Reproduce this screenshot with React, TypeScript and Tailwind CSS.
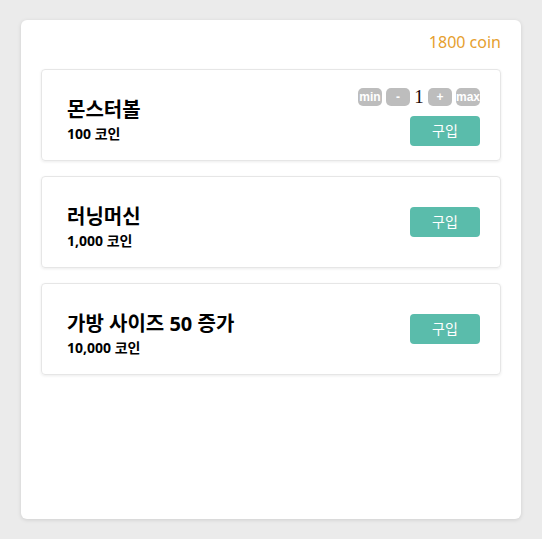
import { useState } from "react";

type Item = { name: string; price: string; stepper?: boolean };

const items: Item[] = [
    { name: "몬스터볼", price: "100 코인", stepper: true },
    { name: "러닝머신", price: "1,000 코인" },
    { name: "가방 사이즈 50 증가", price: "10,000 코인" },
];

function Stepper() {
    const [count, setCount] = useState(1);
    const btn =
        "w-6 h-[18px] rounded-[5px] bg-[#bdbdbd] text-white text-[12px] font-bold leading-[18px] flex items-center justify-center whitespace-nowrap font-['Liberation_Sans',sans-serif]";

    return (
        <div className="flex items-center gap-1">
            <button className={btn} onClick={() => setCount(1)}>min</button>
            <button className={btn} onClick={() => setCount(Math.max(1, count - 1))}>-</button>
            <span className="w-[10px] text-center text-[19px] leading-[18px] text-[#1a0505] font-['Liberation_Serif',serif]">{count}</span>
            <button className={btn} onClick={() => setCount(count + 1)}>+</button>
            <button className={btn} onClick={() => setCount(99)}>max</button>
        </div>
    );
}

export default function App() {
    return (
        <div className="min-h-screen bg-[#ebebeb] pt-5 px-[21px] font-['Noto_Sans','Noto_Sans_CJK_KR',sans-serif]">
            <div className="h-[499px] w-[500px] rounded-md bg-white px-5 pt-[10px] shadow-[0_1px_4px_rgba(0,0,0,0.12)]">
                {/* Wallet */}
                <div className="text-right text-base leading-6 text-[#e6a02e]">1800 coin</div>

                {/* Shop items */}
                <div className="mt-[15px] flex flex-col gap-[15px]">
                    {items.map((item) => (
                        <div
                            key={item.name}
                            className="flex h-[92px] items-center justify-between rounded-[4px] border border-[#e6e6e6] pl-[25px] pr-5 shadow-[0_1px_3px_rgba(0,0,0,0.08)]"
                        >
                            <div className="pt-[10px] text-black">
                                <div className="text-[20px] font-bold leading-7">{item.name}</div>
                                <div className="text-sm font-bold leading-5">{item.price}</div>
                            </div>
                            <div className={`flex flex-col items-end gap-[10px] ${item.stepper ? "mt-1" : ""}`}>
                                {item.stepper && <Stepper />}
                                <button className="h-[30px] w-[70px] rounded-[4px] bg-[#5abcab] text-sm text-white">
                                    구입
                                </button>
                            </div>
                        </div>
                    ))}
                </div>
            </div>
        </div>
    );
}
